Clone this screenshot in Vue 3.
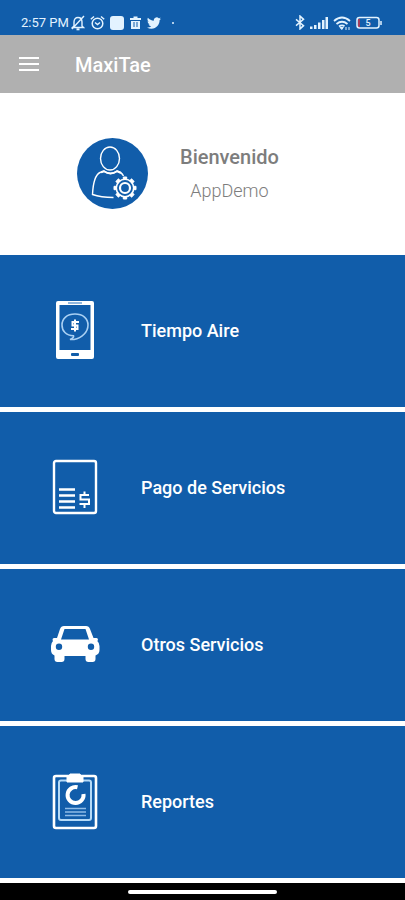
<script setup>
const items = [
  { id: 'phone', label: 'Tiempo Aire' },
  { id: 'bill', label: 'Pago de Servicios' },
  { id: 'car', label: 'Otros Servicios' },
  { id: 'report', label: 'Reportes' }
]
const teeth = [0, 45, 90, 135, 180, 225, 270, 315]
</script>

<template>
  <div class="screen">
    <div class="status">
      <span class="time">2:57 PM</span>
      <div class="notices">
        <svg width="14" height="16" viewBox="0 0 14 16" fill="none" stroke="currentColor" stroke-width="1.4">
          <path d="M3 11V7c0-3 1.600-4.500 4-4.500S11 4 11 7v4l1.500 1.500h-11L3 11M13 1 1 14" />
          <path d="M5.500 14.300h3" stroke-width="2" />
        </svg>
        <svg width="15" height="16" viewBox="0 0 15 16" fill="none" stroke="currentColor" stroke-width="1.500">
          <circle cx="7.500" cy="8.500" r="5.300" />
          <path d="M.8 4.200 4 1.500M14.200 4.200 11 1.500M5 7.500l2.500 2L10 7.500" />
        </svg>
        <svg width="14" height="14" viewBox="0 0 14 14" fill="currentColor"><rect width="14" height="14" rx="3" /></svg>
        <svg class="trash" width="11" height="13" viewBox="0 0 11 13" fill="currentColor">
          <path fill-rule="evenodd" d="M0 2h3.500V.5h4V2H11v2H0zM1 5h9v8H1zM3.500 6v5h1V6zM6.500 6v5h1V6z" />
        </svg>
        <svg width="14" height="14" viewBox="0 0 24 24" fill="currentColor">
          <path d="M23.950 4.570a10 10 0 0 1-2.820.770 4.960 4.960 0 0 0 2.160-2.720c-.95.550-2 .950-3.130 1.180a4.920 4.920 0 0 0-8.380 4.480C7.690 8.090 4.070 6.130 1.640 3.160a4.920 4.920 0 0 0 1.520 6.570 4.900 4.900 0 0 1-2.230-.61v.06a4.920 4.920 0 0 0 3.950 4.830 5 5 0 0 1-2.210.08 4.940 4.940 0 0 0 4.600 3.420A9.870 9.870 0 0 1 0 19.540a13.990 13.990 0 0 0 7.550 2.210c9.050 0 14-7.500 14-13.980v-.64a9.940 9.940 0 0 0 2.400-2.560z" />
        </svg>
        <i class="dot"></i>
      </div>
      <div class="signals">
        <svg width="10" height="15" viewBox="0 0 10 14" preserveAspectRatio="none" fill="none" stroke="currentColor" stroke-width="1.500">
          <path d="m1 4 7.500 6L5 13V1l3.500 3L1 10" />
        </svg>
        <svg width="18" height="12" viewBox="0 0 18 12" fill="currentColor">
          <path d="M0 9.500h2.500V12H0zM4 8h2.500v4H4zM8 5.500h2.500V12H8zM12 3h2.500v9H12zM15.500 0H18v12h-2.500z" />
        </svg>
        <svg width="18" height="14" viewBox="0 0 18 14" fill="none" stroke="currentColor" stroke-width="1.800">
          <path d="M1 5q8-7 16 0M3.500 8q5.500-4.500 11 0M6 10.600q3-2.200 5.500-.3" />
          <path d="m7 11.500 1.800 2 1.500-2zM13 11v3M16 11v3" stroke-width="1" fill="currentColor" />
        </svg>
        <svg width="26" height="14" viewBox="0 0 26 14" fill="none" stroke="currentColor">
          <path d="M3 3v8" stroke="#a23c5c" stroke-width="2" />
          <rect x="1" y="1.500" width="22" height="10.500" rx="2.500" stroke-width="1.500" />
          <path d="M25 5v4" stroke-width="1.500" />
          <text x="12" y="10" text-anchor="middle" font-size="9" font-weight="500" fill="currentColor" stroke="none">5</text>
        </svg>
      </div>
    </div>

    <header class="appbar">
      <button class="menu" type="button" aria-label="Menú"><i></i><i></i><i></i></button>
      <h1>MaxiTae</h1>
    </header>

    <section class="welcome">
      <svg class="avatar" width="71" height="71" viewBox="0 0 71 71" fill="none" stroke="#fff">
        <circle cx="35.500" cy="35.500" r="35.500" fill="#115daa" stroke="none" />
        <ellipse cx="33" cy="20.500" rx="9.500" ry="11.500" stroke-width="1.400" />
        <path d="M36.500 59.500C29 59.500 21 58.500 15.500 56.500C16 46 18 37 23 34.500L27 33.200C31 36 36 36 40 33.200C43 33.500 45 35 46.500 38" stroke-width="1.400" />
        <path d="M24 34.200 27 33.200C31 36 36 36 40 33.200L44 35" stroke-width="2" />
        <g transform="translate(48 50)">
          <circle r="11.500" fill="#115daa" stroke="none" />
          <circle r="8.700" stroke-width="1.600" />
          <path v-for="a in teeth" :key="a" :transform="`rotate(${a})`" d="M-1.700-8.700v-2.300h3.400v2.300" fill="#fff" stroke-width="1" />
          <circle r="5" stroke-width="2.200" />
        </g>
      </svg>
      <div class="greeting">
        <strong>Bienvenido</strong>
        <span>AppDemo</span>
      </div>
    </section>

    <nav class="options">
      <a v-for="item in items" :key="item.id" class="option" href="#">
        <svg v-if="item.id === 'phone'" width="50" height="60" viewBox="0 1 50 60" fill="none" stroke="currentColor">
          <path fill="currentColor" stroke="none" fill-rule="evenodd" d="M8 1h34q2 0 2 2v54q0 2-2 2H8q-2 0-2-2V3q0-2 2-2zm1.500 4v45h31V5zm12.500 48q-1 0-1 1v1q0 1 1 1h6q1 0 1-1v-1q0-1-1-1z" />
          <path d="M18 3h14" stroke="#6fa0d3" stroke-width="1.500" />
          <path d="M25 14c8 0 13 4.500 13 11 0 7-6 13-14 14.500h-4c2-.8 4-2.500 3.500-3.800C16 35.500 12 31 12 25c0-6.500 5-11 13-11z" stroke="#a9d0f3" stroke-width="1.600" />
          <path d="M29 22h-6.500v3.500h5V29H21M25 19.500v12" stroke-width="2" />
        </svg>
        <svg v-else-if="item.id === 'bill'" width="50" height="60" viewBox="0 1 50 60" fill="none" stroke="currentColor">
          <rect x="4" y="4" width="42" height="52" rx="2" stroke-width="2.400" />
          <path d="M9 32.500h16M9 38.500h16M9 44.500h16M9 50.500h16" stroke-width="2.600" />
          <path d="M39 38h-8.500v4.500H39V47h-9.500M34.500 34.500V38M34.500 47v4" stroke-width="2" />
        </svg>
        <svg v-else-if="item.id === 'car'" width="50" height="60" viewBox="0 1 50 60" fill="currentColor">
          <path fill-rule="evenodd" d="M14 12h22q3 0 4 3l3.500 9h3q1.500 0 1.500 2l-.7 1q2.200 2 2.200 5v4q0 4-4 5.500V45q0 3-3 3h-4q-3 0-3-3v-3h-21v3q0 3-3 3h-4q-3 0-3-3v-3.500Q1 40 1 36v-4q0-3 2-5l-.5-1q0-2 1.500-2h3L10 15q1-3 4-3zm.5 3L11 25.500h28L35.500 15zM9 29.500a3.200 3.200 0 1 0 0 6.400 3.200 3.200 0 0 0 0-6.400zm32 0a3.200 3.200 0 1 0 0 6.400 3.200 3.200 0 0 0 0-6.400z" />
        </svg>
        <svg v-else width="50" height="60" viewBox="0 1 50 60" fill="none" stroke="currentColor">
          <rect x="4" y="5" width="42" height="52" rx="2" stroke-width="2.600" />
          <rect x="9" y="9.500" width="32" height="39.500" rx="2" stroke="#b5daf7" stroke-width="2" />
          <path d="M17 5h2l1-2h10l1 2h2v6H17z" fill="currentColor" />
          <path d="M27.500 16.300A8 8 0 1 0 33.500 23" stroke-width="4" />
          <path d="M15 37.500h21M15 41h21M15 44.500h21" stroke="#8fbce7" stroke-width="1.300" />
        </svg>
        <span>{{ item.label }}</span>
      </a>
    </nav>
    <div class="gesture"><i></i></div>
  </div>
</template>

<style>
body { margin: 0; background: #fff; }
</style>

<style scoped>
.screen { min-height: 100vh; display: flex; flex-direction: column; font-family: Roboto, "Liberation Sans", sans-serif; color: #fff; }
.screen svg { flex: none; display: block; }
.status { box-sizing: border-box; height: 35px; padding: 10px 23px 0 21px; display: flex; align-items: center; background: #115daa; color: #e3f3ff; }
.time { font-size: 13px; line-height: 16px; font-weight: 400; white-space: nowrap; }
.notices { display: flex; align-items: center; gap: 5px; margin-left: 2px; }
.trash { margin: 0 1px; }
.dot { width: 2px; height: 2px; margin-left: 6px; border-radius: 50%; background: currentColor; }
.signals { display: flex; align-items: center; gap: 5px; margin-left: auto; }
.appbar { box-sizing: border-box; height: 58px; padding: 2px 19px 0; display: flex; align-items: center; gap: 36px; background: #b0b0b0; }
.menu { width: 20px; height: 20px; padding: 0; border: 0; background: none; color: inherit; display: flex; flex-direction: column; justify-content: flex-start; gap: 4px; padding-top: 2px; }
.menu i { height: 2px; background: currentColor; }
h1 { margin: 0; font-size: 20px; line-height: 24px; font-weight: 500; }
.welcome { box-sizing: border-box; height: 162px; padding: 0 0 2px 77px; display: flex; align-items: center; gap: 32px; }
.greeting { display: flex; flex-direction: column; align-items: center; gap: 10px; padding-top: 2px; color: #7d7d7d; font-size: 18px; line-height: 24px; }
.greeting strong { font-size: 20px; font-weight: 500; }
.greeting span { font-weight: 300; }
.options { display: flex; flex-direction: column; gap: 5px; padding-bottom: 5px; }
.option { height: 152px; padding-left: 50px; display: flex; align-items: center; gap: 41px; background: #115daa; color: #fff; font-size: 18px; line-height: 24px; font-weight: 500; text-decoration: none; }
.gesture { flex: 1 0 17px; display: flex; align-items: center; justify-content: center; background: #000; }
.gesture i { width: 37%; height: 4px; border-radius: 2px; background: #fff; }
</style>
